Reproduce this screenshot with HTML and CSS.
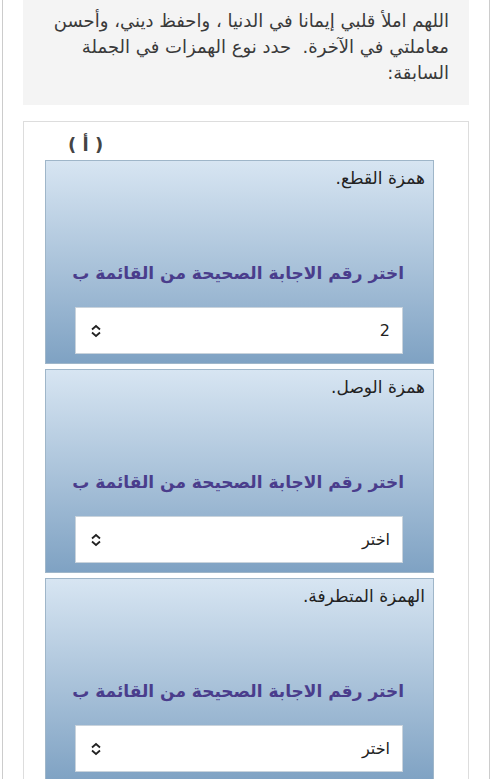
FILE: index.html
```html
<!DOCTYPE html>
<html lang="ar" dir="rtl">
<head>
  <meta charset="UTF-8">
  <title>أنواع الهمزات</title>
  <link rel="stylesheet" href="styles.css">
</head>
<body>
  <div class="frame">
    <div class="question">
      اللهم املأ قلبي إيمانا في الدنيا ، واحفظ ديني، وأحسن معاملتي في الآخرة.&nbsp; حدد نوع الهمزات في الجملة السابقة:
    </div>

    <div class="answers">
      <div class="letter">( أ )</div>

      <div class="item">
        <div class="item-title">همزة القطع.</div>
        <div class="pick">اختر رقم الاجابة الصحيحة من القائمة ب</div>
        <div class="select">
          <span>2</span>
          <svg class="arrows" width="12" height="14" viewBox="0 0 12 14"><path d="M2 5.5 L6 2 L10 5.5 M2 8.5 L6 12 L10 8.5" fill="none" stroke="#222" stroke-width="1.8"/></svg>
        </div>
      </div>

      <div class="item">
        <div class="item-title">همزة الوصل.</div>
        <div class="pick">اختر رقم الاجابة الصحيحة من القائمة ب</div>
        <div class="select">
          <span>اختر</span>
          <svg class="arrows" width="12" height="14" viewBox="0 0 12 14"><path d="M2 5.5 L6 2 L10 5.5 M2 8.5 L6 12 L10 8.5" fill="none" stroke="#222" stroke-width="1.8"/></svg>
        </div>
      </div>

      <div class="item">
        <div class="item-title">الهمزة المتطرفة.</div>
        <div class="pick">اختر رقم الاجابة الصحيحة من القائمة ب</div>
        <div class="select">
          <span>اختر</span>
          <svg class="arrows" width="12" height="14" viewBox="0 0 12 14"><path d="M2 5.5 L6 2 L10 5.5 M2 8.5 L6 12 L10 8.5" fill="none" stroke="#222" stroke-width="1.8"/></svg>
        </div>
      </div>
    </div>
  </div>
</body>
</html>
```

FILE: styles.css
```css
body {
  margin: 0;
  font-family: "DejaVu Sans", sans-serif;
  background: #fff;
  color: #333;
}

.frame {
  margin: 0 6px 0 2px;
  border-left: 1px solid #ccc;
  border-right: 1px solid #ccc;
  padding: 0 20px 0 20px;
  height: 779px;
  overflow: hidden;
  box-sizing: border-box;
}

.question {
  background: #f4f4f4;
  padding: 8px 20px 19px 20px;
  font-size: 18px;
  line-height: 26px;
  color: #3a3a3a;
}

.answers {
  margin-top: 16px;
  border: 1px solid #ddd;
  border-bottom: none;
  padding: 0 34px 0 21px;
}

.letter {
  direction: ltr;
  text-align: left;
  padding: 12px 0 0 23px;
  height: 26px;
  font-size: 18px;
  font-weight: bold;
  color: #444;
}

.item {
  border: 1px solid #9fb6c9;
  background: linear-gradient(#d7e5f2, #7fa2c3);
  padding: 6px 8px 9px 29px;
  margin-bottom: 5px;
}

.item-title {
  font-size: 17px;
  line-height: 22px;
  color: #222;
}

.pick {
  margin-top: 72px;
  padding-right: 21px;
  font-size: 17px;
  font-weight: bold;
  white-space: nowrap;
  color: #4a3d8c;
  line-height: 24px;
}

.select {
  margin: 22px 22px 0 0;
  height: 47px;
  background: #fff;
  border: 1px solid #c9d3dc;
  display: flex;
  align-items: center;
  justify-content: space-between;
  padding: 0 12px 0 14px;
  font-size: 16px;
  color: #222;
  box-sizing: border-box;
}

.arrows {
  display: block;
}
```
